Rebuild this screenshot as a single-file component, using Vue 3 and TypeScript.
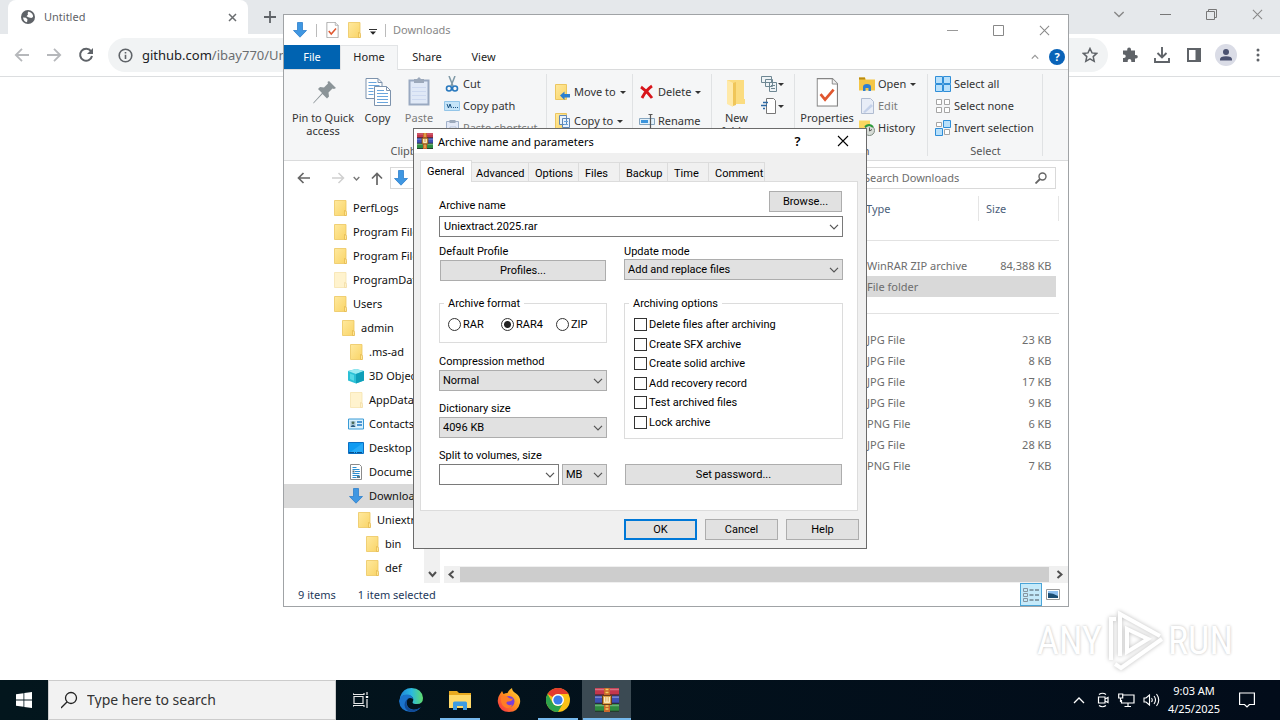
<script setup lang="ts">
import { ref } from 'vue'

interface TreeItem { name: string; level: number; kind: string }
interface FileRow { type: string; size: string }

const tree: TreeItem[] = [
  { name: 'PerfLogs', level: 0, kind: 'folder' },
  { name: 'Program Files', level: 0, kind: 'folder' },
  { name: 'Program Files', level: 0, kind: 'folder' },
  { name: 'ProgramData', level: 0, kind: 'faded' },
  { name: 'Users', level: 0, kind: 'folder' },
  { name: 'admin', level: 1, kind: 'folder' },
  { name: '.ms-ad', level: 2, kind: 'folder' },
  { name: '3D Objects', level: 2, kind: 'cube' },
  { name: 'AppData', level: 2, kind: 'faded' },
  { name: 'Contacts', level: 2, kind: 'contacts' },
  { name: 'Desktop', level: 2, kind: 'desktop' },
  { name: 'Documents', level: 2, kind: 'document' },
  { name: 'Downloads', level: 2, kind: 'download' },
  { name: 'Uniextract', level: 3, kind: 'folder' },
  { name: 'bin', level: 4, kind: 'folder' },
  { name: 'def', level: 4, kind: 'folder' },
]

const recent: FileRow[] = [
  { type: 'WinRAR ZIP archive', size: '84,388 KB' },
  { type: 'File folder', size: '' },
]
const older: FileRow[] = [
  { type: 'JPG File', size: '23 KB' },
  { type: 'JPG File', size: '8 KB' },
  { type: 'JPG File', size: '17 KB' },
  { type: 'JPG File', size: '9 KB' },
  { type: 'PNG File', size: '6 KB' },
  { type: 'JPG File', size: '28 KB' },
  { type: 'PNG File', size: '7 KB' },
]

const dialogTabs = [
  { name: 'General', cls: 't-general' },
  { name: 'Advanced', cls: 't-advanced' },
  { name: 'Options', cls: 't-options' },
  { name: 'Files', cls: 't-files' },
  { name: 'Backup', cls: 't-backup' },
  { name: 'Time', cls: 't-time' },
  { name: 'Comment', cls: 't-comment' },
]
const activeTab = ref('General')
const archiveName = ref('Uniextract.2025.rar')
const format = ref('RAR4')
const formats = ['RAR', 'RAR4', 'ZIP']
const volume = ref('')
const options = ref([
  { label: 'Delete files after archiving', on: false },
  { label: 'Create SFX archive', on: false },
  { label: 'Create solid archive', on: false },
  { label: 'Add recovery record', on: false },
  { label: 'Test archived files', on: false },
  { label: 'Lock archive', on: false },
])
</script>

<template>
  <div class="desktop">
    <svg class="defs" width="0" height="0" aria-hidden="true">
      <defs>
        <linearGradient id="gFolder" x1="0" x2="1" y1="0" y2="1"><stop offset="0" stop-color="#ffe99e" /><stop offset="1" stop-color="#f9d467" /></linearGradient>
        <linearGradient id="gEdge" x1="0" x2="1" y1="0" y2="0"><stop offset="0" stop-color="#1f86d8" /><stop offset=".5" stop-color="#2ab9e0" /><stop offset="1" stop-color="#5fdc6c" /></linearGradient>
        <linearGradient id="gFox" x1="1" x2="0" y1="0" y2="1"><stop offset="0" stop-color="#ffdf3a" /><stop offset=".5" stop-color="#ff8b1d" /><stop offset="1" stop-color="#f5234e" /></linearGradient>
        <symbol id="folder" viewBox="0 0 16 16"><path d="M2.500.5h11.500v15H2.500z" fill="url(#gFolder)" stroke="#ecc660" stroke-width=".8" /><path d="M12.500 10.500q2 0 2 2v3h-2z" fill="#ffe796" stroke="#e2b548" stroke-width=".7" /></symbol>
        <symbol id="faded" viewBox="0 0 16 16"><g opacity=".5"><path d="M2.500.5h11.500v15H2.500z" fill="#ffe99e" stroke="#ecc660" stroke-width=".8" /><path d="M12.500 10.500q2 0 2 2v3h-2z" fill="#ffe796" stroke="#e2b548" stroke-width=".7" /></g></symbol>
        <symbol id="download" viewBox="0 0 16 16"><path d="M5.500.5h5v8h4L8 15.200 1.500 8.500h4z" fill="#3f97e2" stroke="#2f7fcb" stroke-width=".8" /></symbol>
        <symbol id="cube" viewBox="0 0 16 16"><path d="M8 1l8 2v9.500L8 15.500l-8-3V3z" fill="#2bc0d6" /><path d="M0 3l8-2 8 2-8 3z" fill="#9cebf2" /><path d="M8 6l8-3v9.500l-8 3z" fill="#0f9fb9" /><path d="M2 5.500l4 1.500v6L2 11z" fill="#55d9e6" /></symbol>
        <symbol id="contacts" viewBox="0 0 16 16"><path d="M.5 3h15v10H.5z" fill="#d9f1fc" stroke="#3a9bd6" /><path d="M2.500 5h5v6h-5z" fill="#a8c6d6" /><circle cx="5" cy="6.800" r="1.400" fill="#4a6b57" /><path d="M2.500 11q2.500-4 5 0z" fill="#2b597c" /><path d="M9 6h5M9 9h5" stroke="#1f78c4" stroke-width="1.300" /></symbol>
        <symbol id="desktop" viewBox="0 0 16 16"><path d="M.5 2.500h15v11H.5z" fill="#0f9bf2" stroke="#0b6fc2" /><path d="M1 13L15 3v10z" fill="#27abf8" /><path d="M1 12.500h14" stroke="#0a4f8c" stroke-dasharray="5 1 1 1" /></symbol>
        <symbol id="document" viewBox="0 0 16 16"><path d="M2.500.5h9l2 2v13h-11z" fill="#fff" stroke="#8b8b8b" /><path d="M4.500 3.500h4M4.500 5.500h7M7 7.500h5M4.500 9.500h7M4.500 11.500h7M4.500 13.500h4" stroke="#2c8ed0" /><path d="M4.500 6.500h2v2h-2zM9 12h3v2H9z" fill="#5a7888" /></symbol>
        <symbol id="check" viewBox="0 0 24 32"><path d="M.7.7h17L23.300 6.500v24.800H.7z" fill="#fff" stroke="#858585" stroke-width="1.300" /><path d="M17.500.7v6h5.800" fill="#eee" stroke="#858585" /><path d="M4.500 18l5 6L19 13" fill="none" stroke="#e0572f" stroke-width="3" /></symbol>
        <symbol id="rar" viewBox="0 0 16 16"><path d="M0 0h16v5H0z" fill="#c3374c" /><path d="M0 5h16v5.500H0z" fill="#3e50b4" /><path d="M0 10.500h16V16H0z" fill="#2e8c3f" /><path d="M0 1h16M0 6.200h16M0 11.600h16" stroke="#fff" stroke-opacity=".3" /><path d="M0 4.700h16M0 10.200h16M0 15.500h16" stroke="#24202b" stroke-width=".7" /><path d="M6 0h4v16H6z" fill="#c9672a" /><path d="M7 1h2M7 3h2M7 12h2M7 14h2" stroke="#f2cf63" /><path d="M5 5h6v6H5z" fill="#d8a04b" stroke="#6b3d16" stroke-width=".7" /><path d="M6.500 6v3.500h3V6M8 6v3.500" fill="none" stroke="#fff8d8" stroke-width=".8" /></symbol>
        <symbol id="chev" viewBox="0 0 10 6"><path d="M1 .8l4 4 4-4" fill="none" stroke="currentColor" stroke-width="1.200" /></symbol>
        <symbol id="x" viewBox="0 0 12 12"><path d="M1 1l10 10M11 1L1 11" stroke="currentColor" stroke-width="1.100" /></symbol>
      </defs>
    </svg>

    <!-- browser -->
    <main class="browser">
      <div class="strip">
        <div class="tab">
          <svg class="globe" viewBox="0 0 14 14"><circle cx="7" cy="7" r="7" fill="#5f6368" /><path d="M2 7.500l3 .3 1.500 1.700-.5 2.800Q2.500 11.500 2 7.500zM7.500 1.500Q6 3 7 4.500l-1.500 1.700L8 7.500l2.300.5 1.700-1Q12.500 3 7.500 1.500z" fill="#fff" /></svg>
          <span>Untitled</span>
          <button class="bare" aria-label="Close tab"><svg width="9" height="9" viewBox="0 0 9 9"><path d="M1 1l7 7M8 1L1 8" stroke="#6a6d70" stroke-width="1.500" /></svg></button>
        </div>
        <button class="bare plus" aria-label="New tab"><svg width="12" height="12" viewBox="0 0 12 12"><path d="M6 0v12M0 6h12" stroke="#5f6368" stroke-width="1.800" /></svg></button>
        <div class="wctl">
          <button class="bare" aria-label="Search tabs"><svg width="12" height="7" viewBox="0 0 10 6"><use href="#chev" /></svg></button>
          <button class="bare" aria-label="Minimize"><svg width="11" height="11" viewBox="0 0 11 11"><path d="M0 5.500h11" stroke="#777" /></svg></button>
          <button class="bare" aria-label="Restore"><svg width="11" height="11" viewBox="0 0 11 11" fill="none" stroke="#777"><path d="M.5 2.500h8v8h-8zM2.500 2.500v-2h8v8h-2" /></svg></button>
          <button class="bare" aria-label="Close"><svg width="11" height="11"><use href="#x" /></svg></button>
        </div>
      </div>
      <div class="bar">
        <button class="bare nv" aria-label="Back"><svg width="16" height="14" viewBox="0 0 16 14" fill="none" stroke="#b6b8bb" stroke-width="1.800"><path d="M15 7H2M8 .8L1.800 7 8 13.200" /></svg></button>
        <button class="bare nv" aria-label="Forward"><svg width="16" height="14" viewBox="0 0 16 14" fill="none" stroke="#b6b8bb" stroke-width="1.800"><path d="M1 7h13M8 .8L14.200 7 8 13.200" /></svg></button>
        <button class="bare nv" aria-label="Reload"><svg width="16" height="16" viewBox="0 0 16 16"><path d="M13 4.200A6 6 0 1 0 14 9" fill="none" stroke="#5f6368" stroke-width="2" /><path d="M15 1v6H9z" fill="#5f6368" /></svg></button>
        <div class="omni">
          <svg width="15" height="15" viewBox="0 0 15 15"><circle cx="7.500" cy="7.500" r="6.300" fill="none" stroke="#5f6368" stroke-width="1.600" /><path d="M7.500 6.700v4.300M7.500 4v1.500" stroke="#5f6368" stroke-width="1.600" /></svg>
          <a href="#"><b>github.com</b>/ibay770/Un</a>
          <svg class="star" width="16" height="16" viewBox="0 0 16 16"><path d="M8 1.500l2 4.400 4.700.5-3.500 3.200 1 4.700L8 11.900l-4.200 2.400 1-4.700L1.300 6.400 6 5.900z" fill="none" stroke="#5f6368" stroke-width="1.500" /></svg>
        </div>
        <div class="exts">
          <button class="bare" aria-label="Extensions"><svg width="16" height="16" viewBox="0 0 16 16"><path d="M1 3.500h4.200v-1a1.900 1.900 0 0 1 3.800 0v1h4V8h1a1.800 1.800 0 0 1 0 3.600h-1V15H9.300v-1.200a1.800 1.800 0 0 0-3.600 0V15H1v-4h1a1.700 1.700 0 0 0 0-3.500H1z" fill="#5f6368" /></svg></button>
          <button class="bare" aria-label="Downloads"><svg width="18" height="18" viewBox="0 0 18 18" fill="none" stroke="#5f6368" stroke-width="1.900"><path d="M9 1v10M4.500 7L9 11.500 13.500 7M2 12v4h14v-4" /></svg></button>
          <button class="bare" aria-label="Side panel"><svg width="14" height="14" viewBox="0 0 14 14"><path d="M1 1h12v12H1z" fill="none" stroke="#5f6368" stroke-width="2" /><path d="M8.500 1H13v12H8.500z" fill="#5f6368" /></svg></button>
          <button class="bare avatar" aria-label="Profile"><svg width="22" height="22" viewBox="0 0 22 22"><circle cx="11" cy="11" r="11" fill="#dadce6" /><circle cx="11" cy="8" r="3" fill="#4a5170" /><path d="M5 16.500v-1.300q0-3 6-3t6 3v1.300z" fill="#4a5170" /></svg></button>
          <button class="bare" aria-label="Menu"><svg width="4" height="14" viewBox="0 0 4 14" fill="#5f6368"><circle cx="2" cy="2" r="1.500" /><circle cx="2" cy="7" r="1.500" /><circle cx="2" cy="12" r="1.500" /></svg></button>
        </div>
      </div>

      <div class="mark">
        <span>ANY</span>
        <svg width="58" height="62" viewBox="0 0 58 62" fill="none" stroke="#fff" stroke-width="4"><path d="M5 50V9h5M14 46V4l40 22M56 29L15 58l-6-4M21 42V19l21 10z" /></svg>
        <span>RUN</span>
      </div>
    </main>

    <!-- file explorer -->
    <section class="explorer">
      <header class="xtitle">
        <svg width="16" height="16"><use href="#download" /></svg>
        <i class="vbar"></i>
        <svg class="q1" width="13" height="16"><use href="#check" /></svg>
        <svg class="q2" width="16" height="16"><use href="#folder" /></svg>
        <svg class="q3" width="8" height="6" viewBox="0 0 8 6"><path d="M0 .5h8" stroke="#333" /><path d="M1 2.500h6L4 5.800z" fill="#222" /></svg>
        <i class="vbar"></i>
        <h2>Downloads</h2>
        <div class="wctl">
          <button class="bare" aria-label="Minimize"><svg width="11" height="11" viewBox="0 0 11 11"><path d="M0 5.500h11" stroke="#999" /></svg></button>
          <button class="bare" aria-label="Maximize"><svg width="11" height="11" viewBox="0 0 11 11"><path d="M.5.5h10v10H.5z" fill="none" stroke="#888" /></svg></button>
          <button class="bare" aria-label="Close"><svg width="11" height="11"><use href="#x" /></svg></button>
        </div>
      </header>

      <nav class="xtabs">
        <button class="file">File</button>
        <button class="home">Home</button>
        <button class="share">Share</button>
        <button>View</button>
        <span class="fill"></span>
        <button class="bare fold" aria-label="Collapse ribbon"><svg width="8" height="6" viewBox="0 0 10 6"><path d="M1 5l4-4 4 4" fill="none" stroke="#999" stroke-width="1.600" /></svg></button>
        <button class="help" aria-label="Help">?</button>
      </nav>

      <div class="ribbon">
        <div class="group g-clip">
          <div class="tools">
            <button class="big b-pin"><svg viewBox="0 0 32 32"><path d="M22 5l7 7-2 1-1.500-.5-4 4 .5 4-2 2-4.500-4.500L7 27l-1 .5.5-1L15 17l-4-4 2-2 4 .5 4-4-.5-1.500z" fill="#8b9498" /></svg>Pin to Quick access</button>
            <button class="big b-copy"><svg viewBox="0 0 32 32"><g fill="#fff" stroke="#7d93ad"><path d="M4 2.500h12l4 4V22.500H4z" /><path d="M12.500 10.500h12l4 4v15h-16z" /></g><path d="M6.500 6.500h8M6.500 9.500h11M6.500 12.500h5M6.500 15.500h5M6.500 18.500h5M15 14.500h7M15 17.500h11M15 20.500h11M15 23.500h11M15 26.500h11" stroke="#69a5dd" /><path d="M16 2.500v4h4M24.500 10.500v4h4" fill="none" stroke="#7d93ad" /></svg>Copy</button>
            <button class="big b-paste dim"><svg viewBox="0 0 32 32"><path d="M6.500 4.500h19v24h-19z" fill="#dce6f8" stroke="#8397b4" stroke-width="2" /><path d="M11 3h3l2-2 2 2h3v4H11z" fill="#8796ad" /><path d="M9 11.500h14M9 15.500h14M9 19.500h14M9 23.500h14" stroke="#c4d3ef" /></svg>Paste</button>
            <div class="stack s3">
              <button><svg viewBox="0 0 16 16" fill="none"><path d="M5 0l4 10M11 0L7 10" stroke="#7f99a7" stroke-width="1.500" /><circle cx="5" cy="12.500" r="2.500" stroke="#2878bd" stroke-width="1.600" /><circle cx="11" cy="12.500" r="2.500" stroke="#2878bd" stroke-width="1.600" /></svg>Cut</button>
              <button><svg viewBox="0 0 16 16"><path d="M.5 3.500h15v9H.5z" fill="#c5e4f8" stroke="#93c5e8" /><path d="M3 6l1.500 4L6 6l1.500 4M9 9.500h1M11 9.500h1M13 9.500h1" fill="none" stroke="#1b5382" /></svg>Copy path</button>
              <button class="dim"><svg viewBox="0 0 16 16"><path d="M2.500 1.500h12v14h-12z" fill="#dfe7f7" stroke="#8da0bf" /><path d="M5.500 0h6v3h-6z" fill="#8796ad" /><path d="M6 13V7h6v6z" fill="#fff" stroke="#a2b4d3" /></svg>Paste shortcut</button>
            </div>
          </div>
          <span class="gname">Clipboard</span>
        </div>
        <div class="group g-move">
          <div class="stack s2">
            <button><svg viewBox="0 0 16 16"><path d="M.5.5h11v15H.5z" fill="url(#gFolder)" stroke="#ecc660" /><path d="M5 11.500l4.500-4v2.500H15v3.500H9.500V16z" fill="#2b7fd0" /></svg>Move to<em></em></button>
            <button><svg viewBox="0 0 16 16"><path d="M.5.5h11v15H.5z" fill="url(#gFolder)" stroke="#ecc660" /><path d="M4.500 2.500h7v9h-7zM7.500 5.500h7v9h-7z" fill="#e9f2fb" stroke="#5f86b4" /><path d="M9 8.500h4M9 11.500h4" stroke="#69a5dd" /></svg>Copy to<em></em></button>
          </div>
        </div>
        <div class="group g-del">
          <div class="stack s2">
            <button><svg viewBox="0 0 16 16"><path d="M2 3q6 4 11 11M13 2Q7 6 3 14" fill="none" stroke="#d8151b" stroke-width="2.800" /></svg>Delete<em></em></button>
            <button><svg viewBox="0 0 16 16"><path d="M.5 5.500h15v6H.5z" fill="#e2f1fb" stroke="#86a5bf" /><path d="M2 7h7v3H2z" fill="#3d95dc" /><path d="M9.500 1.500h4M9.500 15.500h4M11.500 1.500v14" stroke="#555" stroke-width="1.200" /></svg>Rename</button>
          </div>
        </div>
        <div class="group g-new">
          <button class="big b-new"><svg viewBox="0 0 32 32"><path d="M6 4h17v19h1v5H6z" fill="#fbdc80" /><path d="M6 4l6 3v24l-6-3z" fill="#ffe9a8" /><path d="M12 7l3-1v23l-3 1z" fill="#f0c659" /></svg>New folder</button>
          <div class="stack mini">
            <button aria-label="New item"><svg viewBox="0 0 16 16" fill="#eef3f6" stroke="#6e8793"><path d="M.5.500h10v6H.5zM4.500 3.500h7v7h-7zM8.500 6.500h7v9h-7z" /><path d="M10 9.500h4M10 12.500h4" /></svg><em></em></button>
            <button aria-label="Easy access"><svg viewBox="0 0 16 16"><path d="M5.500.5h7l2 2v13h-9z" fill="#fff" stroke="#777" /><path d="M2 4.500h5M0 7.500h6M2 10.500h2" stroke="#2d6aa5" stroke-width="1.400" /></svg><em></em></button>
          </div>
        </div>
        <div class="group g-open">
          <div class="tools">
            <button class="big b-prop"><svg viewBox="-4 0 32 32"><use href="#check" width="24" height="32" transform="translate(1.500 2) scale(.9)" /></svg>Properties</button>
            <div class="stack s3">
              <button><svg viewBox="0 0 16 16"><path d="M0 1.500h6l1 2h9v11H0z" fill="#f4c647" /><path d="M0 1.500h6v2H0z" fill="#b98b12" /><path d="M4 15V11q0-3 4-3t4 3v4h-2.500v-3h-3v3z" fill="#2f7fd2" /></svg>Open<em></em></button>
              <button class="dim"><svg viewBox="0 0 16 16"><path d="M2.500.5h9l3 3v12h-12z" fill="#e6ecf8" stroke="#a0aec8" /><path d="M4 14l8-8 2 2-8 7z" fill="#b9c8e6" /></svg>Edit</button>
              <button><svg viewBox="0 0 16 16"><path d="M0 .5h11v12H0z" fill="#f9d65f" /><circle cx="10.500" cy="10.500" r="5" fill="#d7dcd7" stroke="#7d8a80" /><path d="M6 7q4-4 8 0" fill="none" stroke="#2c9b3a" stroke-width="2" /><path d="M10.500 7.500v3.500l2.500-1.500" fill="none" stroke="#555" /></svg>History</button>
            </div>
          </div>
          <span class="gname">Open</span>
        </div>
        <div class="group g-sel">
          <div class="stack s3">
            <button><svg viewBox="0 0 16 16" fill="#b8e0fb" stroke="#2f8ed8"><path d="M.5.5h7v7h-7zM8.500.5h7v7h-7zM.5 8.500h7v7h-7zM8.500 8.500h7v7h-7z" /></svg>Select all</button>
            <button><svg viewBox="0 0 16 16" fill="#fff" stroke="#a5a5a5"><path d="M1.500 1.500h5v5h-5zM9.500 1.500h5v5h-5zM1.500 9.500h5v5h-5zM9.500 9.500h5v5h-5z" /></svg>Select none</button>
            <button><svg viewBox="0 0 16 16"><path d="M1.500 2.500h5v4h-5zM9.500 9.500h5v5h-5z" fill="#fff" stroke="#a5a5a5" /><path d="M8.500.5h7v7h-7zM.5 8.500h7v7h-7z" fill="#b8e0fb" stroke="#2f8ed8" /></svg>Invert selection</button>
          </div>
          <span class="gname">Select</span>
        </div>
      </div>

      <div class="xnav">
        <button class="bare n1" aria-label="Back"><svg width="13" height="12" viewBox="0 0 13 12" fill="none" stroke="#666" stroke-width="1.700"><path d="M13 6H1.500M6.500 1l-5 5 5 5" /></svg></button>
        <button class="bare n2" aria-label="Forward"><svg width="13" height="12" viewBox="0 0 13 12" fill="none" stroke="#d0d0d0" stroke-width="1.500"><path d="M0 6h11.500M6.500 1l5 5-5 5" /></svg></button>
        <button class="bare n3" aria-label="Recent"><svg width="7" height="5" viewBox="0 0 10 6"><path d="M1 1l4 4 4-4" fill="none" stroke="#777" stroke-width="2" /></svg></button>
        <button class="bare n4" aria-label="Up"><svg width="12" height="13" viewBox="0 0 12 13" fill="none" stroke="#666" stroke-width="1.700"><path d="M6 13V1.500M1 6.500l5-5 5 5" /></svg></button>
        <div class="addr"><svg width="16" height="16"><use href="#download" /></svg></div>
        <div class="find"><input aria-label="Search Downloads" placeholder="Search Downloads" /><svg width="12" height="12" viewBox="0 0 12 12" fill="none" stroke="#666"><circle cx="7.500" cy="4.500" r="3.500" stroke-width="1.400" /><path d="M5 7l-4.500 4.500" stroke-width="1.800" /></svg></div>
      </div>

      <div class="xbody">
        <ul class="tree">
          <li v-for="(t, i) in tree" :key="i" :class="['lv' + t.level, { on: t.name === 'Downloads' }]">
            <svg width="16" height="16"><use :href="'#' + t.kind" /></svg><span>{{ t.name }}</span>
          </li>
        </ul>
        <div class="vscroll"><svg width="9" height="7" viewBox="0 0 9 7"><path d="M1 1l3.500 4L8 1" fill="none" stroke="#505050" stroke-width="2" /></svg></div>
        <div class="list">
          <table>
            <thead><tr><th>Type</th><th class="sz">Size</th></tr></thead>
            <tbody>
              <tr class="rule r1"><td colspan="2"><i></i></td></tr>
              <tr v-for="f in recent" :key="f.type" :class="{ on: f.type === 'File folder' }"><td>{{ f.type }}</td><td class="num">{{ f.size }}</td></tr>
              <tr class="rule r2"><td colspan="2"><i></i></td></tr>
              <tr v-for="f in older" :key="f.size"><td>{{ f.type }}</td><td class="num">{{ f.size }}</td></tr>
            </tbody>
          </table>
          <div class="hscroll">
            <svg width="7" height="9" viewBox="0 0 7 9"><path d="M5.500 1l-4 3.500 4 3.500" fill="none" stroke="#505050" stroke-width="2" /></svg>
            <i></i>
            <svg width="7" height="9" viewBox="0 0 7 9"><path d="M1.500 1l4 3.500-4 3.500" fill="none" stroke="#505050" stroke-width="2" /></svg>
          </div>
        </div>
      </div>
      <footer class="xstatus">
        <span>9 items</span><span>1 item selected</span>
        <button class="view on" aria-label="Details"><svg width="16" height="14" viewBox="0 0 16 14" fill="none"><path d="M.5.5h4v3h-4zM.5 5.500h4v3h-4zM.5 10.500h4v3h-4z" stroke="#8795a0" /><path d="M6.500 2h4M12 2h4M6.500 7h4M12 7h4M6.500 12h4M12 12h4" stroke="#46525c" /></svg></button>
        <button class="view" aria-label="Large icons"><svg width="14" height="11" viewBox="0 0 14 11"><path d="M.5.5h13v10H.5z" fill="#fff" stroke="#999" /><path d="M2 2h10v7H2z" fill="#8fc0f0" /><path d="M2 4q5 0 10 3v2H2z" fill="#1c4d73" /></svg></button>
      </footer>
    </section>

    <!-- archive dialog -->
    <form class="dialog" @submit.prevent>
      <header class="dtitle">
        <svg width="16" height="16"><use href="#rar" /></svg>
        <h1>Archive name and parameters</h1>
        <button type="button" class="bare qm" aria-label="Help">?</button>
        <button type="button" class="bare" aria-label="Close"><svg width="12" height="12"><use href="#x" /></svg></button>
      </header>
      <div class="dtabs">
        <button v-for="t in dialogTabs" :key="t.name" type="button" :class="[t.cls, { on: activeTab === t.name }]" @click="activeTab = t.name">{{ t.name }}</button>
      </div>
      <div class="pane">
        <div class="namehead"><label for="an">Archive name</label><button type="button" class="btn browse">Browse...</button></div>
        <div class="combo"><input id="an" v-model="archiveName" /><button type="button" class="bare" aria-label="Previous names"><svg width="10" height="6"><use href="#chev" /></svg></button></div>
        <div class="cols">
          <div class="left">
            <label for="pf">Default Profile</label>
            <button id="pf" type="button" class="btn profile">Profiles...</button>
            <fieldset class="fmt">
              <legend>Archive format</legend>
              <div class="radios">
                <label v-for="f in formats" :key="f"><input v-model="format" type="radio" name="fmt" :value="f" />{{ f }}</label>
              </div>
            </fieldset>
            <label for="cm">Compression method</label>
            <div class="sel"><select id="cm"><option>Normal</option></select><svg width="10" height="6"><use href="#chev" /></svg></div>
            <label for="ds">Dictionary size</label>
            <div class="sel"><select id="ds"><option>4096 KB</option></select><svg width="10" height="6"><use href="#chev" /></svg></div>
            <label for="sv">Split to volumes, size</label>
            <div class="split">
              <div class="combo"><input id="sv" v-model="volume" /><button type="button" class="bare" aria-label="Volume sizes"><svg width="10" height="6"><use href="#chev" /></svg></button></div>
              <div class="sel unit"><select aria-label="Unit"><option>MB</option></select><svg width="10" height="6"><use href="#chev" /></svg></div>
            </div>
          </div>
          <div class="right">
            <label for="um">Update mode</label>
            <div class="sel"><select id="um"><option>Add and replace files</option></select><svg width="10" height="6"><use href="#chev" /></svg></div>
            <fieldset class="opts">
              <legend>Archiving options</legend>
              <div class="checks">
                <label v-for="o in options" :key="o.label"><input v-model="o.on" type="checkbox" />{{ o.label }}</label>
              </div>
            </fieldset>
            <button type="button" class="btn pass">Set password...</button>
          </div>
        </div>
      </div>
      <div class="actions">
        <button class="btn ok">OK</button>
        <button type="button" class="btn">Cancel</button>
        <button type="button" class="btn">Help</button>
      </div>
    </form>

    <!-- taskbar -->
    <footer class="taskbar">
      <button class="start" aria-label="Start"><svg width="16" height="16" viewBox="0 0 16 16" fill="#fff"><path d="M0 2.200L7.500 1.200v6.400H0zM8.300 1.100L16 0v7.600H8.300zM0 8.400h7.500v6.400L0 13.800zM8.300 8.400H16V16l-7.700-1.100z" /></svg></button>
      <div class="search"><svg width="18" height="18" viewBox="0 0 18 18" fill="none" stroke="#222" stroke-width="1.300"><circle cx="10" cy="7" r="5.500" /><path d="M6 11l-6 6" /></svg><input aria-label="Search" placeholder="Type here to search" /></div>
      <button class="app task" aria-label="Task view"><svg width="16" height="16" viewBox="0 0 16 16" fill="none" stroke="#e8e8e8" stroke-width="1.200"><path d="M1 4.500h9v7H1zM0 1v1.500h11V1M0 15v-1.500h11V15M14 0v3M14 7v9" /><path d="M12.800 4h2.400v2h-2.400z" fill="#fff" stroke="none" /></svg></button>
      <button class="app" aria-label="Edge"><svg width="24" height="24" viewBox="0 0 24 24"><path d="M1 9Q4 0 12.500 0 23 .5 24 10q0 6-6 6-4 0-4.500-1.500 1.500-2 .5-4.500Q12 7 8 7 3 7 1 11z" fill="url(#gEdge)" /><path d="M0 13Q1 6.500 8 6.500q5 0 6.200 4.500Q9 8.500 7.500 13q-.5 7 6 8.500 4 1 8-2Q18 24 12 24 1 23.500 0 13z" fill="#1b74cc" /><path d="M9 11q-3 4-.5 8 4 5.500 13.500.2Q18 24 12 24q-6-1.500-6.500-7Q6 12 9 11z" fill="#114a96" /></svg></button>
      <button class="app run" aria-label="File Explorer"><svg width="22" height="20" viewBox="0 0 22 20"><path d="M0 1h8l2 2h12v15H0z" fill="#e8a91f" /><path d="M0 5h22v13H0z" fill="#ffd969" /><path d="M4 20v-7q0-1.500 1.500-1.500h11Q18 11.500 18 13v7h-4v-4H8v4z" fill="#3c9be2" /></svg></button>
      <button class="app" aria-label="Firefox"><svg width="24" height="24" viewBox="0 0 24 24"><path d="M3 6q1.500-2 2-3l1.500 3q2-1 4-1Q12 2 15 0q0 3 4 5.500Q24 9 23 15q-2 9-11 9T1 15Q0 10 3 6z" fill="url(#gFox)" /><circle cx="12" cy="13.500" r="5.500" fill="#7a3fd8" /><path d="M4 9q4-3 8 1 2 1 4 .5-1 3-4.500 3-2.500 0-2 2 2 3 6 1-2 4-6 3.500Q3 18 4 9z" fill="#ff7d26" /></svg></button>
      <button class="app run" aria-label="Chrome"><svg width="24" height="24" viewBox="0 0 24 24"><circle cx="12" cy="12" r="12" fill="#fbc116" /><path d="M1.600 6A12 12 0 0 1 22.400 6H12a6 6 0 0 0-5.200 3z" fill="#e33b2e" /><path d="M1.600 6A12 12 0 0 0 12 24l5.200-9A6 6 0 0 1 6.800 15z" fill="#2da24c" /><circle cx="12" cy="12" r="6" fill="#fff" /><circle cx="12" cy="12" r="4.600" fill="#3b7de8" /></svg></button>
      <button class="app run now" aria-label="WinRAR"><svg width="24" height="24"><use href="#rar" /></svg></button>
      <span class="fill"></span>
      <div class="tray">
        <svg width="12" height="8" viewBox="0 0 12 8"><path d="M1 7l5-5 5 5" fill="none" stroke="#fff" stroke-width="1.300" /></svg>
        <svg width="14" height="16" viewBox="0 0 14 16" fill="none" stroke="#fff" stroke-width="1.200"><path d="M2.500 5h6.500v6H2.500zM9 7l3-1.500v5L9 9M3 2.500Q6.500 0 10 2.500M3 13.500q3.500 2.500 7 0" /></svg>
        <svg width="17" height="16" viewBox="0 0 17 16" fill="none" stroke="#fff" stroke-width="1.200"><path d="M5 3h11v8H3.500V8M.7 2h4v4h-4zM2.500 6v4M10 11v3M6.500 14.500H13" /></svg>
        <svg width="17" height="14" viewBox="0 0 17 14" fill="none" stroke="#fff" stroke-width="1.100"><path d="M1 5v4h2l3.500 3V2L3 5zM8.500 5q1.500 2 0 4M11 3q3 4 0 8M13.500 1q4.500 6 0 12" /></svg>
      </div>
      <time class="clock"><span>9:03 AM</span><span>4/25/2025</span></time>
      <button class="note" aria-label="Notifications"><svg width="16" height="16" viewBox="0 0 16 16"><path d="M.6 1h14.800v11.500h-5L8 15l-2.500-2.500H.6z" fill="none" stroke="#fff" stroke-width="1.200" /></svg></button>
    </footer>
  </div>
</template>

<style>
html, body { margin: 0; }
</style>

<style scoped>
* { box-sizing: border-box; }
.desktop { position: relative; display: flex; flex-direction: column; height: 100vh; overflow: hidden; background: #fff; font: 11px/16px "Noto Sans", "Open Sans", sans-serif; color: #222; }
.defs { position: absolute; }
button, input, select { font: inherit; color: inherit; }
button { padding: 0; border: 0; background: none; white-space: nowrap; }
svg { display: block; flex: none; }
i { display: block; }
.fill { flex: 1; }
.bare { display: flex; align-items: center; justify-content: center; }

/* browser */
.browser { position: relative; flex: 1; display: flex; flex-direction: column; }
.strip { display: flex; height: 34px; background: #e5e8eb; }
.tab { display: flex; align-items: center; width: 240px; margin-left: 8px; padding: 0 11px 0 13px; border-radius: 8px 8px 0 0; background: #fff; color: #5f6368; }
.globe { width: 14px; height: 14px; margin-right: 9px; }
.tab span { flex: 1; font-size: 11px; }
.plus { width: 44px; }
.wctl { display: flex; margin-left: auto; color: #888; }
.wctl button { width: 46px; }
.strip .wctl { margin-top: -6px; }
.bar { display: flex; align-items: center; height: 43px; padding-left: 6px; border-bottom: 1px solid #dcdee0; }
.nv { width: 32px; }
.omni { flex: 1; display: flex; align-items: center; height: 34px; margin-left: 6px; padding: 0 10px; border-radius: 17px; background: #f1f3f4; }
.omni a { flex: 1; margin-left: 9px; font-size: 13px; color: #6a6d70; text-decoration: none; }
.omni b { font-weight: 400; color: #202124; }
.exts { display: flex; padding: 0 6px; }
.exts button { width: 32px; }

.mark { position: absolute; right: 47px; bottom: 8px; display: flex; align-items: center; gap: 4px; font: 400 38px/62px "Roboto Condensed", "Roboto", sans-serif; color: #fff; text-shadow: 0 0 3px #bbb; }
.mark svg { overflow: visible; filter: drop-shadow(0 0 2px #bbb); }

/* explorer */
.explorer { position: absolute; left: 283px; top: 14px; width: 786px; border: 1px solid #a0a3a6; background: #fff; }
.xtitle { display: flex; align-items: center; height: 30px; padding: 0 1px 0 8px; }
.vbar { width: 1px; height: 13px; margin-left: 8px; background: #bbb; }
.q1 { margin-left: 9px; }
.q2 { margin-left: 7px; }
.q3 { margin: 3px 0 0 7px; }
h2 { margin: 0 0 0 7px; font-size: 11px; font-weight: 400; color: #888; }
.xtitle .wctl { align-self: stretch; }
.xtabs { display: flex; height: 24px; font-size: 11px; }
.xtabs button { width: 55px; }
.xtabs .file { width: 56px; background: #0063b1; color: #fff; }
.xtabs .home { width: 58px; margin-bottom: -1px; padding-bottom: 2px; border: 1px solid #e2e4e6; border-bottom: 0; background: #f5f6f7; z-index: 1; }
.xtabs .share { width: 58px; }
.xtabs .fold { width: 20px; }
.xtabs .help { align-self: center; width: 16px; height: 16px; margin: 0 3px 0 4px; border-radius: 8px; background: #0a63b8; color: #fff; font-weight: 700; line-height: 16px; }
.ribbon { display: flex; height: 92px; border: solid #dadbdc; border-width: 1px 0; background: #f5f6f7; color: #333; }
.group { position: relative; display: flex; flex-direction: column; padding-top: 3px; }
.group::after { content: ""; position: absolute; right: 0; top: 4px; bottom: 4px; width: 1px; background: #e0e2e4; }
.tools { display: flex; }
.gname { margin: auto 0 1px; text-align: center; color: #555; }
.g-clip { width: 263px; }
.g-move { width: 86px; padding-left: 8px; }
.g-del { width: 79px; padding-left: 6px; }
.g-new { width: 83px; flex-direction: row; }
.g-open { width: 133px; }
.g-open .gname { margin-right: 12px; }
.g-sel { width: 115px; padding-left: 7px; }
.g-sel .gname { margin-left: -7px; }
.big { display: flex; flex-direction: column; align-items: center; line-height: 13px; white-space: normal; padding-top: 3px; }
.big svg { width: 32px; height: 32px; margin-bottom: 3px; }
.b-pin { width: 76px; padding-inline: 4px; margin-left: 1px; }
.b-copy { width: 33px; }
.b-paste { width: 50px; }
.b-new { width: 49px; padding-inline: 6px; }
.b-prop { width: 64px; }
.dim { color: #7a7a7a; }
.dim svg { opacity: .8; }
.stack { display: flex; flex-direction: column; align-items: flex-start; }
.stack button { display: flex; align-items: center; gap: 3px; height: 22px; }
.stack svg { width: 16px; height: 16px; }
.s2 { padding-top: 8px; gap: 7px; }
.mini button { gap: 0; }
.stack em { margin-left: 1px; border: 3px solid transparent; border-top-color: #333; border-bottom: 0; }
.xnav { display: flex; align-items: center; height: 34px; margin-bottom: 1px; }
.n1 { width: 38px; } .n2 { width: 32px; } .n3 { width: 5px; } .n4 { width: 36px; }
.xnav .n4 { margin-right: -5px; }
.addr { flex: 1; display: flex; align-items: center; height: 22px; padding-left: 2px; border: 1px solid #d9d9d9; }
.find { display: flex; align-items: center; width: 200px; height: 22px; margin: 0 12px 0 10px; padding: 0 8px 0 7px; border: 1px solid #d9d9d9; }
.find input { flex: 1; min-width: 0; padding: 0; border: 0; outline: 0; background: none; }
.find input::placeholder { color: #6d6d6d; opacity: 1; }
.xbody { display: flex; height: 387px; }
.tree { width: 140px; margin: 0; padding: 0; list-style: none; color: #111; }
.tree li { display: flex; align-items: center; gap: 5px; height: 24px; padding-left: 48px; white-space: nowrap; }
.tree .lv1 { padding-left: 56px; }
.tree .lv2 { padding-left: 64px; }
.tree .lv3 { padding-left: 72px; }
.tree .lv4 { padding-left: 80px; }
.tree .on { background: #d9d9d9; }
.vscroll { display: flex; align-items: flex-end; justify-content: center; width: 16px; padding-bottom: 5px; background: #f0f0f0; }
.list { flex: 1; display: flex; flex-direction: column; margin-left: 4px; }
table { width: 199px; margin: 0 7px 0 auto; border-collapse: collapse; color: #6d6d6d; }
th { height: 25px; padding: 0 0 0 4px; font-weight: 400; text-align: left; color: #4c607a; border-right: 1px solid #e5e5e5; }
th.sz { width: 80px; padding-left: 7px; }
td { height: 21px; padding: 0 0 0 5px; white-space: nowrap; }
.num { padding-right: 7px; text-align: right; }
.on td { background: #d9d9d9; }
.on .num { border-right: 5px solid #fff; }
.rule td { padding: 0; }
.rule i { height: 1px; background: #e2e2e2; }
.rule.r1 td { height: 34px; padding-top: 4px; }
.rule.r2 td { height: 32px; padding-top: 1px; }
.hscroll { display: flex; align-items: center; height: 17px; margin: auto 0 0; padding: 0 5px 0 4px; background: #f0f0f0; }
.hscroll i { flex: 1; height: 15px; margin: 0 7px 0 5px; background: #cdcdcd; }
.xstatus { display: flex; align-items: center; height: 23px; padding-left: 14px; color: #1e395b; }
.xstatus span:nth-child(2) { flex: 1; margin-left: 22px; }
.view { display: flex; align-items: center; justify-content: center; width: 22px; height: 23px; }
.view.on { border: 1px solid #4aa5d8; background: #c5eafa; }
.view:last-child { margin-right: 4px; }

/* dialog */
.dialog { position: absolute; left: 413px; top: 128px; width: 454px; border: 1px solid #6b6b6b; background: #f0f0f0; font: 11px/15px "Roboto", "Noto Sans", sans-serif; color: #000; }
.dtitle { display: flex; align-items: center; height: 24px; padding: 0 1px 0 3px; background: #fff; font-family: "Noto Sans", sans-serif; }
h1 { flex: 1; margin: 0 0 0 5px; font-size: 11px; font-weight: 400; }
.dtitle button { width: 45px; }
.dtitle .qm { font-size: 13px; font-weight: 600; }
.dtabs { display: flex; align-items: flex-end; padding: 7px 7px 0 6px; }
.dtabs button { height: 19px; padding: 2px 0 0 6px; border: 1px solid #dcdcdc; border-width: 1px 1px 0 0; text-align: left; }
.dtabs .on { height: 22px; margin-bottom: -1px; padding-top: 0; border-left-width: 1px; background: #fff; z-index: 1; }
.t-general { width: 52px; } .t-advanced { width: 57px; } .t-options { width: 50px; }
.t-files { width: 41px; } .t-backup { width: 48px; } .t-time { width: 41px; } .t-comment { width: 56px; }
.dtabs .t-advanced { padding-left: 4px; }
.pane { margin: 0 8px 0 6px; padding: 9px 14px 25px 18px; border: 1px solid #dcdcdc; background: #fff; }
.namehead { display: flex; align-items: flex-start; justify-content: space-between; height: 25px; }
.namehead label { padding-top: 7px; }
.btn { width: 73px; height: 21px; border: 1px solid #adadad; background: #e1e1e1; text-align: center; }
.browse { margin-right: 1px; }
.combo { display: flex; height: 21px; border: 1px solid #7a7a7a; background: #fff; color: #000; }
.combo input { flex: 1; min-width: 0; padding: 0 4px; border: 0; outline: 0; background: none; }
.combo button { width: 16px; color: #555; }
.cols { display: flex; gap: 17px; margin-top: 7px; }
.left { flex: 168; min-width: 0; display: flex; flex-direction: column; }
.right { flex: 219; min-width: 0; display: flex; flex-direction: column; }
.left > label, .right > label { height: 15px; }
.btn.profile { width: auto; margin: 1px 1px 0; }
.sel { display: grid; align-items: center; color: #555; }
.sel > * { grid-area: 1 / 1; }
.sel select { width: 100%; height: 21px; padding: 0 3px; border: 1px solid #adadad; border-radius: 0; background: #e1e1e1; color: #000; appearance: none; }
.sel svg { justify-self: end; margin-right: 4px; pointer-events: none; }
.left > .sel { margin: 1px 0 10px; }
fieldset { min-width: 0; margin: 0; padding: 0; border: 1px solid #dcdcdc; }
legend { margin-left: 4px; padding: 0 4px; line-height: 15px; }
fieldset label { display: flex; align-items: center; }
.fmt { height: 47px; margin: 15px 0 11px; }
.radios { display: grid; grid-template-columns: 53px 55px auto; padding: 6px 0 0 8px; }
fieldset input { appearance: none; width: 13px; height: 13px; margin: 0 2px 0 0; border: 1px solid #333; background: #fff; }
input[type="radio"] { border-radius: 7px; }
input[type="radio"]:checked { background: radial-gradient(circle, #222 3px, #fff 4px); }
input[type="checkbox"]:checked { background: #333; }
.split { display: flex; gap: 3px; margin-top: 1px; }
.split .combo { flex: 1; min-width: 0; }
.unit { width: 45px; }
.opts { height: 143px; margin: 16px 0 25px; }
.checks { display: grid; grid-auto-rows: 1fr; height: 117px; margin-top: 4px; padding-left: 9px; }
.btn.pass { width: auto; margin: 0 1px; }
.actions { display: flex; justify-content: flex-end; gap: 8px; padding: 8px 7px; }
.ok { border: 2px solid #0078d7; }

/* taskbar */
.taskbar { position: relative; display: flex; height: 40px; background: linear-gradient(90deg, #03161d, #020c1a); color: #fff; }
.start { display: flex; align-items: center; justify-content: center; width: 48px; }
.search { display: flex; align-items: center; gap: 8px; width: 288px; padding-left: 12px; border: 1px solid #ccc; background: #f2f2f2; }
.search input { flex: 1; padding: 0; border: 0; outline: 0; background: none; font-size: 14px; }
.search input::placeholder { color: #333; opacity: 1; }
.app { display: flex; align-items: center; justify-content: center; width: 49px; }
.task { width: 50px; }
.run { background: linear-gradient(#76b9ed, #76b9ed) bottom / 40px 2px no-repeat; }
.now { background: linear-gradient(#76b9ed, #76b9ed) bottom / 48px 2px no-repeat, #3b4a53; }
.tray { display: flex; align-items: center; gap: 8px; }
.tray svg:first-child { margin-right: 3px; }
.clock { display: flex; flex-direction: column; justify-content: center; width: 68px; line-height: 18px; text-align: center; }
.note { display: flex; align-items: center; justify-content: center; width: 38px; margin-right: 14px; }
</style>
